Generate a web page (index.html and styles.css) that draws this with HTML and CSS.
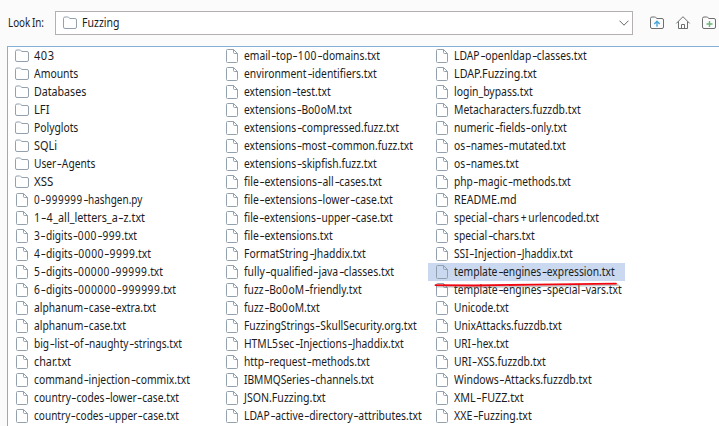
FILE: index.html
```
<!DOCTYPE html>
<html lang="en">
<head>
<meta charset="utf-8">
<title>Open</title>
<link rel="stylesheet" href="styles.css">
</head>
<body>
<svg class="defs" aria-hidden="true">
  <symbol id="folder" viewBox="0 0 16 16"><path d="M1.5 3.5q0-1.5 1.5-1.5h2.7q.6 0 1 .5l1.3 1h5q1.5 0 1.5 1.5v7q0 1.5-1.5 1.5h-10q-1.5 0-1.5-1.5z"/></symbol>
  <symbol id="file" viewBox="0 0 16 16"><path d="M9.5 1.5h-6q-1 0-1 1v11q0 1 1 1h9q1 0 1-1v-8l-4-4v3q0 1 1 1h3"/></symbol>
</svg>
<header class="toolbar">
  <span class="label"><span class="fit" data-width="36">Look<i class="gap"></i>In:</span></span>
  <div class="combo">
    <svg class="icon"><use href="#folder"/></svg>
    <span class="value"><span class="fit" data-width="37.5">Fuzzing</span></span>
    <svg class="arrow" viewBox="0 0 10 6"><path d="M.5.7 5 5.2 9.5.7"/></svg>
  </div>
  <div class="actions">
    <svg class="icon" viewBox="0 0 16 16"><path d="M1.5 3.5q0-1.5 1.5-1.5h2.7q.6 0 1 .5l1.3 1h5q1.5 0 1.5 1.5v7q0 1.5-1.5 1.5h-10q-1.5 0-1.5-1.5z"/><path class="blue" d="M8 11.8v-5M5.3 8.9 8 6.2l2.7 2.7"/></svg>
    <svg class="icon" viewBox="0 0 16 16"><path d="M1.3 8.4 8 1.7l6.7 6.7M3.5 6.5v7h9v-7M6.5 13.5v-4h3v4"/></svg>
    <svg class="icon" viewBox="0 0 16 16"><path d="M1.5 3.5q0-1.5 1.5-1.5h2.7q.6 0 1 .5l1.3 1h5q1.5 0 1.5 1.5v7q0 1.5-1.5 1.5h-10q-1.5 0-1.5-1.5z"/><path class="green" d="M8.5 6v6M5.5 9h6"/></svg>
  </div>
</header>
<main class="files" id="files"></main>
<script src="files.js"></script>
</body>
</html>
```
FILE: files.js
```
// Each entry is a name and the width of its label; a trailing slash marks a folder.
const columns = [
  [["403/", 20.6], ["Amounts/", 44.3], ["Databases/", 52.3], ["LFI/", 15.5], ["Polyglots/", 44.3], ["SQLi/", 23],
   ["User-Agents/", 61.3], ["XSS/", 19.3], ["0-999999-hashgen.py", 108.3], ["1-4_all_letters_a-z.txt", 111],
   ["3-digits-000-999.txt", 103], ["4-digits-0000-9999.txt", 117], ["5-digits-00000-99999.txt", 129],
   ["6-digits-000000-999999.txt", 142], ["alphanum-case-extra.txt", 122], ["alphanum-case.txt", 92],
   ["big-list-of-naughty-strings.txt", 148], ["char.txt", 37], ["command-injection-commix.txt", 156],
   ["country-codes-lower-case.txt", 145], ["country-codes-upper-case.txt", 145]],
  [["email-top-100-domains.txt", 136], ["environment-identifiers.txt", 132.7], ["extension-test.txt", 86.7],
   ["extensions-Bo0oM.txt", 107.7], ["extensions-compressed.fuzz.txt", 155], ["extensions-most-common.fuzz.txt", 169],
   ["extensions-skipfish.fuzz.txt", 132.7], ["file-extensions-all-cases.txt", 137.7],
   ["file-extensions-lower-case.txt", 148.7], ["file-extensions-upper-case.txt", 148.7], ["file-extensions.txt", 88.7],
   ["FormatString-Jhaddix.txt", 121.7], ["fully-qualified-java-classes.txt", 150], ["fuzz-Bo0oM-friendly.txt", 117.7],
   ["fuzz-Bo0oM.txt", 75.7], ["FuzzingStrings-SkullSecurity.org.txt", 172.7], ["HTML5sec-Injections-Jhaddix.txt", 159.7],
   ["http-request-methods.txt", 125.7], ["IBMMQSeries-channels.txt", 129.7], ["JSON.Fuzzing.txt", 81.7],
   ["LDAP-active-directory-attributes.txt", 177.7]],
  [["LDAP-openldap-classes.txt", 132.7], ["LDAP.Fuzzing.txt", 82.7], ["login_bypass.txt", 78.7],
   ["Metacharacters.fuzzdb.txt", 126.7], ["numeric-fields-only.txt", 112.7], ["os-names-mutated.txt", 111.7],
   ["os-names.txt", 64.7], ["php-magic-methods.txt", 116.7], ["README.md", 62.5], ["special-chars+urlencoded.txt", 145],
   ["special-chars.txt", 80.7], ["SSI-Injection-Jhaddix.txt", 118.7], ["template-engines-expression.txt", 160.7],
   ["template-engines-special-vars.txt", 167.7], ["Unicode.txt", 54.7], ["UnixAttacks.fuzzdb.txt", 107.7],
   ["URI-hex.txt", 54.7], ["URI-XSS.fuzzdb.txt", 91.7], ["Windows-Attacks.fuzzdb.txt", 137.7],
   ["XML-FUZZ.txt", 69.7], ["XXE-Fuzzing.txt", 77.7]]
];
const selected = "template-engines-expression.txt";
const kind = c => c === "-" ? "hyphen" : c === "+" ? "plus" : "digits";

document.getElementById("files").innerHTML = columns.map(names =>
  `<div class="column">${names.map(([entry, width]) => {
    const folder = entry.endsWith("/");
    const name = entry.replace("/", "");
    const text = name.replace(/[-+]|\d+/g, c => `<span class="${kind(c)}">${c}</span>`);
    const line = name === selected
      ? `<svg class="underline" viewBox="0 0 186 10"><path class="shadow" d="M3 6.5 50 7 184 5"/><path d="M1.5 5.2 40 5.5 100 4.6 182 3.6"/></svg>` : "";
    return `<div class="row${line ? " selected" : ""}"><svg class="icon"><use href="#${folder ? "folder" : "file"}"/></svg><span class="name" style="width:${width}px"><span class="fit" data-width="${width}">${text}</span></span>${line}</div>`;
  }).join("")}</div>`).join("");

// Condense every label to its width.
document.querySelectorAll(".fit").forEach(el => {
  el.style.transform = `scaleX(${el.dataset.width / el.getBoundingClientRect().width})`;
});
```
FILE: styles.css
```
* { box-sizing: border-box; }
body {
  margin: 0;
  height: 426px;
  overflow: hidden;
  background: #fbfbfb;
  color: #1c1c1c;
  font: 12px/18px "Noto Sans", sans-serif;
  display: flex;
  flex-direction: column;
}
svg { fill: none; stroke: #93a1ae; flex: none; }
.defs { position: absolute; width: 0; height: 0; }
.icon { width: 16px; height: 16px; }
.toolbar {
  height: 46px;
  flex: none;
  display: flex;
  align-items: center;
  padding-left: 7.5px;
}
.label { width: 47.5px; white-space: nowrap; }
.gap { display: inline-block; width: 2px; }
.fit { display: inline-block; white-space: nowrap; transform-origin: 0 50%; }
.combo {
  width: 578px;
  height: 24px;
  border: 1px solid #b4b0b0;
  background: #fff;
  display: flex;
  align-items: center;
  gap: 4px;
  padding: 0 3px 0 6px;
}
.value { flex: 1; }
.arrow { width: 10px; height: 6px; stroke: #666; }
.actions { display: flex; gap: 10px; margin-left: 16px; }
.actions .icon { stroke: #6e6e6e; }
.actions .blue { stroke: #46a5db; stroke-width: 1.4; }
.actions .green { stroke: #69b57c; stroke-width: 1.4; }
.files {
  flex: 1;
  min-height: 0;
  margin: 0 0 0 7px;
  padding-left: 1px;
  border: solid #87b0d7;
  border-width: 1px 0 0 1px;
  background: #fff;
  display: grid;
  grid-template-columns: 210px 210px 1fr;
}
.column { display: flex; flex-direction: column; align-items: flex-start; }
.row {
  height: 18px;
  flex: none;
  display: flex;
  align-items: center;
  gap: 4px;
  padding: 0 10px 0 5px;
  position: relative;
}
.name { white-space: nowrap; height: 18px; }
.hyphen { display: inline-block; width: 6.5px; text-indent: .5px; transform: scaleX(1.55); transform-origin: 0 50%; }
.digits { letter-spacing: .6px; }
.plus { display: inline-block; width: 11px; text-align: center; }
.selected { background: #cad9f0; margin-left: -1px; padding-left: 6px; }
.underline {
  position: absolute;
  left: 6px;
  top: 17px;
  width: 186px;
  height: 10px;
  z-index: 1;
  stroke: #f00510;
  stroke-width: 1.8;
  stroke-linecap: round;
}
.underline .shadow { stroke: #777; opacity: .4; }
```
